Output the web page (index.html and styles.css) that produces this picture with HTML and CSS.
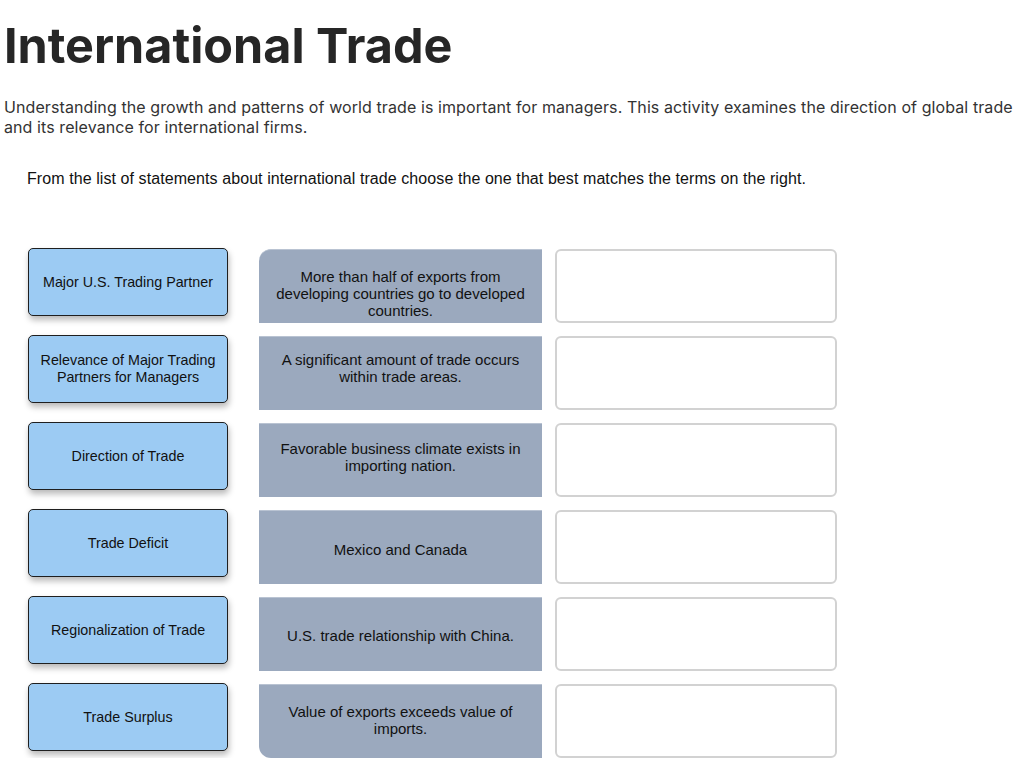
FILE: index.html
```html
<!DOCTYPE html>
<html lang="en">
<head>
<meta charset="utf-8">
<title>International Trade</title>
<link rel="stylesheet" href="styles.css">
</head>
<body>
<main class="page">
  <h1 class="title">International Trade</h1>
  <p class="intro">Understanding the growth and patterns of world trade is important for managers. This activity examines the direction of global trade and its relevance for international firms.</p>
  <p class="instruction">From the list of statements about international trade choose the one that best matches the terms on the right.</p>
  <div class="board">
    <div class="row">
      <div class="term">Major U.S. Trading Partner</div>
      <div class="statement first shift-down-lg">More than half of exports from developing countries go to developed countries.</div>
      <div class="slot"></div>
    </div>
    <div class="row">
      <div class="term">Relevance of Major Trading Partners for Managers</div>
      <div class="statement shift-up-lg">A significant amount of trade occurs within trade areas.</div>
      <div class="slot"></div>
    </div>
    <div class="row">
      <div class="term">Direction of Trade</div>
      <div class="statement shift-up-md">Favorable business climate exists in importing nation.</div>
      <div class="slot"></div>
    </div>
    <div class="row">
      <div class="term">Trade Deficit</div>
      <div class="statement shift-down-sm">Mexico and Canada</div>
      <div class="slot"></div>
    </div>
    <div class="row">
      <div class="term">Regionalization of Trade</div>
      <div class="statement shift-down-xs">U.S. trade relationship with China.</div>
      <div class="slot"></div>
    </div>
    <div class="row">
      <div class="term">Trade Surplus</div>
      <div class="statement last shift-up-sm">Value of exports exceeds value of imports.</div>
      <div class="slot"></div>
    </div>
  </div>
</main>
</body>
</html>
```

FILE: styles.css
```css
html, body {
  margin: 0;
  padding: 0;
  background: #ffffff;
}

.page {
  padding: 0 0 0 4px;
}

.title {
  margin: 0;
  padding-top: 18px;
  font-family: "Inter", "Open Sans", sans-serif;
  font-weight: 700;
  font-size: 48.5px;
  line-height: 56px;
  color: #262626;
  font-variant-ligatures: none;
}

.intro {
  margin: 23px 0 0 0;
  font-family: "Inter", "Open Sans", sans-serif;
  font-size: 16px;
  line-height: 20px;
  letter-spacing: 0.09px;
  color: #333333;
}

.instruction {
  margin: 33px 0 0 23px;
  font-family: "Liberation Sans", Arial, sans-serif;
  font-size: 16px;
  line-height: 18px;
  letter-spacing: 0.08px;
  color: #111111;
}

.board {
  display: flex;
  flex-direction: column;
  gap: 13px;
  margin: 61px 0 0 24px;
  font-family: "Liberation Sans", Arial, sans-serif;
  color: #111111;
}

.row {
  display: flex;
  height: 74px;
}

.term {
  box-sizing: border-box;
  flex: 0 0 200px;
  height: 68px;
  margin: -1px 31px 0 0;
  display: flex;
  align-items: center;
  justify-content: center;
  text-align: center;
  padding: 0 8px;
  font-size: 14.3px;
  line-height: 17px;
  background: #9ccbf3;
  border: 1px solid #1f1f1f;
  border-radius: 5px;
  box-shadow: 1px 4px 6px rgba(0, 0, 0, 0.28);
}

.statement {
  box-sizing: border-box;
  flex: 0 0 283px;
  display: flex;
  align-items: center;
  justify-content: center;
  text-align: center;
  padding: 0 12px;
  font-size: 15px;
  line-height: 17px;
  background: #9ba9be;
  border-top: 1px solid #b9c3d2;
}

.statement.first {
  border-top-left-radius: 12px;
}

.statement.last {
  border-bottom-left-radius: 12px;
}

.shift-down-lg { padding-top: 14px; }
.shift-down-sm { padding-top: 4px; }
.shift-down-xs { padding-top: 2px; }
.shift-up-lg { padding-bottom: 12px; }
.shift-up-md { padding-bottom: 8px; }
.shift-up-sm { padding-bottom: 4px; }

.slot {
  box-sizing: border-box;
  flex: 0 0 282px;
  margin-left: 13px;
  background: #ffffff;
  border: 2px solid #d2d2d2;
  border-radius: 6px;
}
```
